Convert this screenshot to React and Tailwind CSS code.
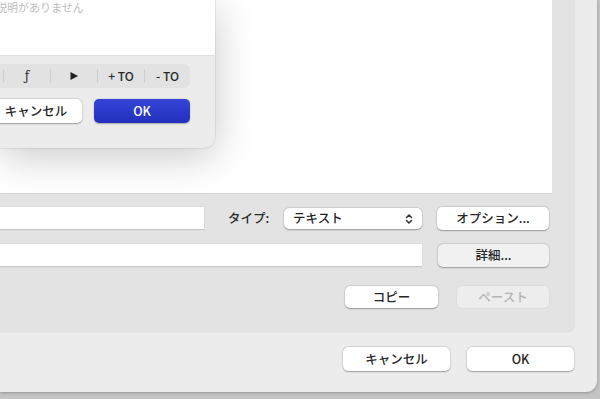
export default function App() {
  const font = { fontFamily: '"Noto Sans CJK JP", "Noto Sans", sans-serif' };
  const btn =
    "flex items-center justify-center rounded-[5px] bg-white text-[12.5px] font-medium text-[#262626] shadow-[0_0.5px_1.5px_rgba(0,0,0,0.3),0_0_0_0.5px_rgba(0,0,0,0.08)]";
  return (
    <div className="relative w-[600px] h-[399px] overflow-hidden bg-[#c4c4c4]" style={font}>
      {/* main window */}
      <div className="w-[597px] h-[392px] bg-[#ececec] rounded-br-[11px] flex flex-col shadow-[0_1px_3px_rgba(0,0,0,0.25)]">
        {/* group box */}
        <div className="w-[575px] h-[333px] bg-[#e3e3e3] rounded-br-[7px] flex flex-col">
          <div className="w-[552px] h-[194px] bg-white border-b border-[#d6d6d6]" />
          {/* row 1 */}
          <div className="mt-[13px] flex items-center h-[23px]">
            <div className="w-[204px] h-[23px] bg-white border-b border-[#c8c8c8] shadow-[0_0_0_0.5px_rgba(0,0,0,0.06)]" />
            <span className="ml-[24px] w-[50px] text-[12.5px] font-medium text-[#2a2a2a]">タイプ:</span>
            <div className={"ml-[6px] w-[138px] h-[21px] !justify-between px-[9px] " + btn}>
              <span>テキスト</span>
              <svg width="8" height="12" viewBox="0 0 8 12" fill="none" stroke="#333" strokeWidth="1.5" strokeLinecap="round" strokeLinejoin="round">
                <path d="M1.5 4.5 L4 2 L6.5 4.5" />
                <path d="M1.5 7.5 L4 10 L6.5 7.5" />
              </svg>
            </div>
            <div className={"ml-[15px] w-[112px] h-[23px] " + btn}>オプション...</div>
          </div>
          {/* row 2 */}
          <div className="mt-[14px] flex items-center h-[23px]">
            <div className="w-[422px] h-[23px] bg-white border-b border-[#c8c8c8] shadow-[0_0_0_0.5px_rgba(0,0,0,0.06)]" />
            <div className={"ml-[16px] w-[111px] h-[23px] !bg-[#f1f1f1] " + btn}>詳細...</div>
          </div>
          {/* row 3 */}
          <div className="mt-[19px] flex items-center h-[22px]">
            <div className={"ml-[345px] w-[93px] h-[22px] " + btn}>コピー</div>
            <div className="ml-[19px] w-[92px] h-[22px] flex items-center justify-center rounded-[5px] bg-[#ededed] text-[12.5px] font-medium text-[#b4b4b4] shadow-[0_0_0_0.5px_rgba(0,0,0,0.05)]">
              ペースト
            </div>
          </div>
        </div>
        {/* bottom buttons */}
        <div className="mt-[14px] flex items-center h-[24px]">
          <div className={"ml-[343px] w-[107px] h-[24px] " + btn}>キャンセル</div>
          <div className={"ml-[17px] w-[107px] h-[24px] " + btn}>OK</div>
        </div>
      </div>

      {/* sheet overlay */}
      <div className="absolute left-0 top-0 w-[215px] h-[148px] bg-[#ececec] rounded-br-[10px] flex flex-col shadow-[0_8px_40px_rgba(0,0,0,0.22),0_0_0_0.5px_rgba(0,0,0,0.12)]">
        <div className="h-[56px] bg-white border-b border-[#e0e0e0] overflow-hidden">
          <span className="block -ml-[4px] -mt-[1px] text-[11px] text-[#bdbdbd] leading-[16px] whitespace-nowrap">説明がありません</span>
        </div>
        <div className="mt-[8px] w-[190px] h-[24px] bg-[#e2e2e2] rounded-r-[6px] flex items-center text-[12px] font-medium text-[#2a2a2a]">
          <div className="w-[4px] h-[14px] border-r border-[#cfcfcf]" />
          <div className="w-[46px] flex justify-center" style={{ fontFamily: '"DejaVu Serif", serif' }}>ƒ</div>
          <div className="w-px h-[14px] bg-[#cfcfcf]" />
          <div className="w-[46px] flex justify-center">
            <svg width="10" height="10" viewBox="0 0 10 10"><path d="M1.5 1 L9 5 L1.5 9 Z" fill="#222" /></svg>
          </div>
          <div className="w-px h-[14px] bg-[#cfcfcf]" />
          <div className="w-[46px] flex justify-center text-[12px]">+ TO</div>
          <div className="w-px h-[14px] bg-[#cfcfcf]" />
          <div className="w-[45px] flex justify-center text-[12px]">- TO</div>
        </div>
        <div className="mt-[11px] flex items-center h-[24px]">
          <div className={"-ml-[10px] w-[92px] h-[24px] " + btn}>キャンセル</div>
          <div className="ml-[12px] w-[96px] h-[24px] flex items-center justify-center rounded-[5px] text-[12.5px] font-medium text-white bg-gradient-to-b from-[#3344d6] to-[#2430bd] shadow-[0_0.5px_1.5px_rgba(0,0,0,0.3)]">
            OK
          </div>
        </div>
      </div>
    </div>
  );
}
